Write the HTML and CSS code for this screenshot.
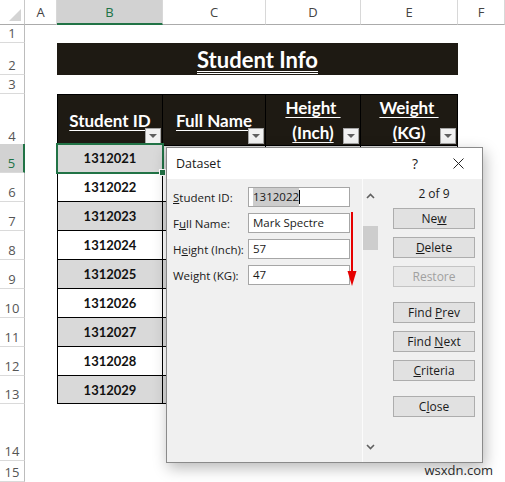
FILE: index.html
```html
<!DOCTYPE html>
<html lang="en">
<head>
  <meta charset="UTF-8">
  <meta name="viewport" content="width=device-width, initial-scale=1.0">
  <title>Student Info - Dataset</title>
  <link rel="stylesheet" href="styles.css">
</head>
<body>
  <div class="sheet">
    <div class="row r-cols">
      <div class="corner"><span class="corner-tri"></span></div>
      <div class="col-head">A</div>
      <div class="col-head selected">B</div>
      <div class="col-head">C</div>
      <div class="col-head">D</div>
      <div class="col-head">E</div>
      <div class="col-head">F</div>
    </div>

    <div class="row r-sm"><div class="row-head">1</div></div>

    <div class="row r-title">
      <div class="row-head">2</div>
      <div class="cell"></div>
      <div class="title-cell"><span>Student Info</span></div>
    </div>

    <div class="row r-gap"><div class="row-head">3</div></div>

    <div class="row r-head">
      <div class="row-head">4</div>
      <div class="cell"></div>
      <div class="th first"><span>Student ID</span><i class="filter"></i></div>
      <div class="th"><span>Full Name</span><i class="filter"></i></div>
      <div class="th"><span>Height&nbsp;<br>(Inch)</span><i class="filter"></i></div>
      <div class="th"><span>Weight&nbsp;<br>(KG)</span><i class="filter"></i></div>
    </div>

    <!-- columns C-E sit under the dialog, left empty -->
    <div class="row r-data alt">
      <div class="row-head selected">5</div>
      <div class="cell"></div>
      <div class="td first active">1312021</div>
      <div class="td"></div><div class="td"></div><div class="td"></div>
    </div>
    <div class="row r-data">
      <div class="row-head">6</div>
      <div class="cell"></div>
      <div class="td first">1312022</div>
      <div class="td"></div><div class="td"></div><div class="td"></div>
    </div>
    <div class="row r-data alt">
      <div class="row-head">7</div>
      <div class="cell"></div>
      <div class="td first">1312023</div>
      <div class="td"></div><div class="td"></div><div class="td"></div>
    </div>
    <div class="row r-data">
      <div class="row-head">8</div>
      <div class="cell"></div>
      <div class="td first">1312024</div>
      <div class="td"></div><div class="td"></div><div class="td"></div>
    </div>
    <div class="row r-data alt">
      <div class="row-head">9</div>
      <div class="cell"></div>
      <div class="td first">1312025</div>
      <div class="td"></div><div class="td"></div><div class="td"></div>
    </div>
    <div class="row r-data">
      <div class="row-head">10</div>
      <div class="cell"></div>
      <div class="td first">1312026</div>
      <div class="td"></div><div class="td"></div><div class="td"></div>
    </div>
    <div class="row r-data alt">
      <div class="row-head">11</div>
      <div class="cell"></div>
      <div class="td first">1312027</div>
      <div class="td"></div><div class="td"></div><div class="td"></div>
    </div>
    <div class="row r-data">
      <div class="row-head">12</div>
      <div class="cell"></div>
      <div class="td first">1312028</div>
      <div class="td"></div><div class="td"></div><div class="td"></div>
    </div>
    <div class="row r-last alt">
      <div class="row-head">13</div>
      <div class="cell"></div>
      <div class="td first">1312029</div>
      <div class="td"></div><div class="td"></div><div class="td"></div>
    </div>

    <div class="row r-tall"><div class="row-head">14</div></div>
    <div class="row r-end"><div class="row-head">15</div></div>

    <!-- Data Form dialog -->
    <div class="dialog">
      <div class="dlg-title">
        <span class="dlg-name">Dataset</span>
        <span class="dlg-help">?</span>
        <svg class="dlg-close" width="11" height="11" viewBox="0 0 11 11">
          <path d="M0.5 0.5 L10.5 10.5 M10.5 0.5 L0.5 10.5" stroke="#222" stroke-width="1" fill="none"/>
        </svg>
      </div>
      <div class="dlg-body">
        <div class="dlg-form">
          <div class="field">
            <label><u>S</u>tudent ID:</label>
            <div class="input"><span class="sel-text">1312022</span><span class="caret"></span></div>
          </div>
          <div class="field">
            <label>F<u>u</u>ll Name:</label>
            <div class="input">Mark Spectre</div>
          </div>
          <div class="field">
            <label>H<u>e</u>ight (Inch):</label>
            <div class="input">57</div>
          </div>
          <div class="field">
            <label>Wei<u>g</u>ht (KG):</label>
            <div class="input">47</div>
          </div>
        </div>

        <div class="scroll">
          <svg class="chev" width="9" height="6" viewBox="0 0 9 6">
            <path d="M1 5 L4.5 1.5 L8 5" stroke="#606060" stroke-width="1.6" fill="none"/>
          </svg>
          <div class="thumb"></div>
          <svg class="chev down" width="9" height="6" viewBox="0 0 9 6">
            <path d="M1 1 L4.5 4.5 L8 1" stroke="#606060" stroke-width="1.6" fill="none"/>
          </svg>
        </div>

        <div class="dlg-buttons">
          <div class="count">2 of 9</div>
          <button class="btn">Ne<u>w</u></button>
          <button class="btn"><u>D</u>elete</button>
          <button class="btn" disabled>Restore</button>
          <button class="btn group">Find <u>P</u>rev</button>
          <button class="btn">Find <u>N</u>ext</button>
          <button class="btn"><u>C</u>riteria</button>
          <button class="btn group">C<u>l</u>ose</button>
        </div>
      </div>

      <svg class="red-arrow" width="10" height="74" viewBox="0 0 10 74">
        <line x1="5" y1="0" x2="5" y2="62" stroke="#e60000" stroke-width="2"/>
        <polygon points="0.5,59 9.5,59 5,74" fill="#e60000"/>
      </svg>
    </div>

    <div class="watermark">wsxdn.com</div>
  </div>
</body>
</html>
```

FILE: styles.css
```css
body {
  margin: 0;
  background: #fff;
  font-family: Lato, "Open Sans", sans-serif;
  overflow: hidden;
}
.sheet {
  position: relative;
  width: 505px;
  height: 482px;
  overflow: hidden;
}
.row {
  display: grid;
  grid-template-columns: 25px 32px 106px 103px 95px 97px 47px;
}
.r-cols { height: 25px; }
.r-sm { height: 18px; }
.r-title { height: 32px; }
.r-gap { height: 19px; }
.r-head { height: 50px; }
.r-data { height: 29px; }
.r-last { height: 28px; }
.r-tall { height: 57px; }
.r-end { height: 21px; }

/* headers */
.corner {
  position: relative;
  border-right: 1px solid #c8c8c8;
  border-bottom: 1px solid #ababab;
}
.corner-tri {
  position: absolute;
  right: 3px;
  bottom: 3px;
  width: 0;
  height: 0;
  border-left: 12px solid transparent;
  border-bottom: 12px solid #d4d4d4;
}
.col-head {
  display: flex;
  align-items: center;
  justify-content: center;
  font-family: "Open Sans", sans-serif;
  font-size: 13px;
  color: #444;
  border-right: 1px solid #d8d8d8;
  border-bottom: 1px solid #ababab;
  box-sizing: border-box;
}
.col-head.selected {
  background: #d2d2d2;
  color: #217346;
  border-bottom: 2px solid #217346;
}
.row-head {
  display: flex;
  align-items: flex-end;
  justify-content: center;
  padding-bottom: 1px;
  box-sizing: border-box;
  font-family: "Open Sans", sans-serif;
  font-size: 13px;
  line-height: 16px;
  color: #555;
  border-right: 1px solid #bcbcbc;
  border-bottom: 1px solid #dadada;
}
.row-head.selected {
  background: #d2d2d2;
  color: #217346;
  border-right: 2px solid #217346;
}

/* title */
.title-cell {
  grid-column: span 4;
  background: #1e1a13;
  display: flex;
  align-items: center;
  justify-content: center;
  color: #fff;
  font-weight: bold;
  font-size: 22px;
}
.title-cell span {
  text-decoration: underline double;
  text-underline-offset: 3px;
  text-decoration-thickness: 1px;
}

/* table */
.th {
  position: relative;
  background: #1e1a13;
  border-top: 1px solid #000;
  border-right: 1px solid #000;
  border-bottom: 1px solid #000;
  box-sizing: border-box;
  display: flex;
  align-items: center;
  justify-content: center;
  text-align: center;
  color: #fff;
  font-weight: bold;
  font-size: 17px;
  line-height: 25px;
}
.th span {
  text-decoration: underline;
  text-underline-offset: 3px;
  text-decoration-thickness: 1px;
}
.first { border-left: 1px solid #000; }
.filter {
  position: absolute;
  right: 1px;
  bottom: 1px;
  width: 16px;
  height: 16px;
  box-sizing: border-box;
  background: #f2f2f2;
  border: 1px solid #a6a6a6;
}
.filter::after {
  content: "";
  position: absolute;
  left: 3px;
  top: 5px;
  border-left: 4px solid transparent;
  border-right: 4px solid transparent;
  border-top: 4px solid #606060;
}
.td {
  display: flex;
  align-items: center;
  justify-content: center;
  border-right: 1px solid #000;
  border-bottom: 1px solid #000;
  box-sizing: border-box;
  font-weight: bold;
  font-size: 13px;
  color: #111;
}
.alt .td { background: #d9d9d9; }
.td.active {
  position: relative;
  outline: 2px solid #217346;
  outline-offset: -1px;
}
.td.active::after {
  content: "";
  position: absolute;
  right: -4px;
  bottom: -4px;
  width: 5px;
  height: 5px;
  background: #217346;
  border: 1px solid #fff;
}

/* dialog */
.dialog {
  position: absolute;
  left: 166px;
  top: 147px;
  width: 317px;
  height: 316px;
  box-sizing: border-box;
  border: 1px solid #8a8a8a;
  background: #f0f0f0;
  box-shadow: 2px 5px 14px rgba(0, 0, 0, 0.28);
  display: flex;
  flex-direction: column;
  font-family: "Open Sans", sans-serif;
  font-size: 11.5px;
  color: #1a1a1a;
}
.dlg-title {
  height: 31px;
  background: #fff;
  display: flex;
  align-items: center;
  padding-left: 9px;
  font-size: 12.5px;
}
.dlg-name { flex: 1; }
.dlg-help {
  width: 12px;
  margin-right: 29px;
  font-size: 14px;
}
.dlg-close { margin-right: 18px; }
.dlg-body {
  flex: 1;
  display: flex;
}
.dlg-form {
  width: 195px;
  padding: 8px 0 0 6px;
  box-sizing: border-box;
}
.field {
  display: flex;
  align-items: center;
  height: 20px;
  margin-bottom: 6px;
}
.field label {
  width: 75px;
  flex: none;
  white-space: nowrap;
}
.input {
  width: 102px;
  height: 20px;
  box-sizing: border-box;
  border: 1px solid #a6a6a6;
  background: #fff;
  padding-left: 4px;
  line-height: 18px;
  display: flex;
  align-items: center;
}
.sel-text { background: #cccccc; }
.caret {
  width: 1px;
  height: 14px;
  background: #000;
}
.scroll {
  width: 16px;
  border-left: 1px solid #fbfbfb;
  display: flex;
  flex-direction: column;
  align-items: center;
  padding-top: 14px;
  padding-bottom: 12px;
  box-sizing: border-box;
}
.thumb {
  width: 15px;
  height: 24px;
  margin-top: 27px;
  background: #cdcdcd;
}
.chev.down { margin-top: auto; }
.dlg-buttons {
  flex: 1;
  padding-left: 15px;
  display: flex;
  flex-direction: column;
}
.count {
  width: 82px;
  height: 20px;
  line-height: 20px;
  margin-top: 5px;
  text-align: center;
  font-size: 12px;
}
.btn {
  width: 82px;
  height: 21px;
  margin-top: 8px;
  padding: 0;
  background: #e1e1e1;
  border: 1px solid #adadad;
  font-family: "Open Sans", sans-serif;
  font-size: 12px;
  color: #1a1a1a;
}
.count + .btn { margin-top: 4px; }
.btn.group { margin-top: 15px; }
.btn:disabled {
  color: #a0a0a0;
  background: #e8e8e8;
  border-color: #c4c4c4;
}
.red-arrow {
  position: absolute;
  left: 180px;
  top: 64px;
}
.watermark {
  position: absolute;
  right: 12px;
  bottom: 3px;
  font-family: "Open Sans", sans-serif;
  font-size: 13px;
  color: #2a2a2a;
}
```
